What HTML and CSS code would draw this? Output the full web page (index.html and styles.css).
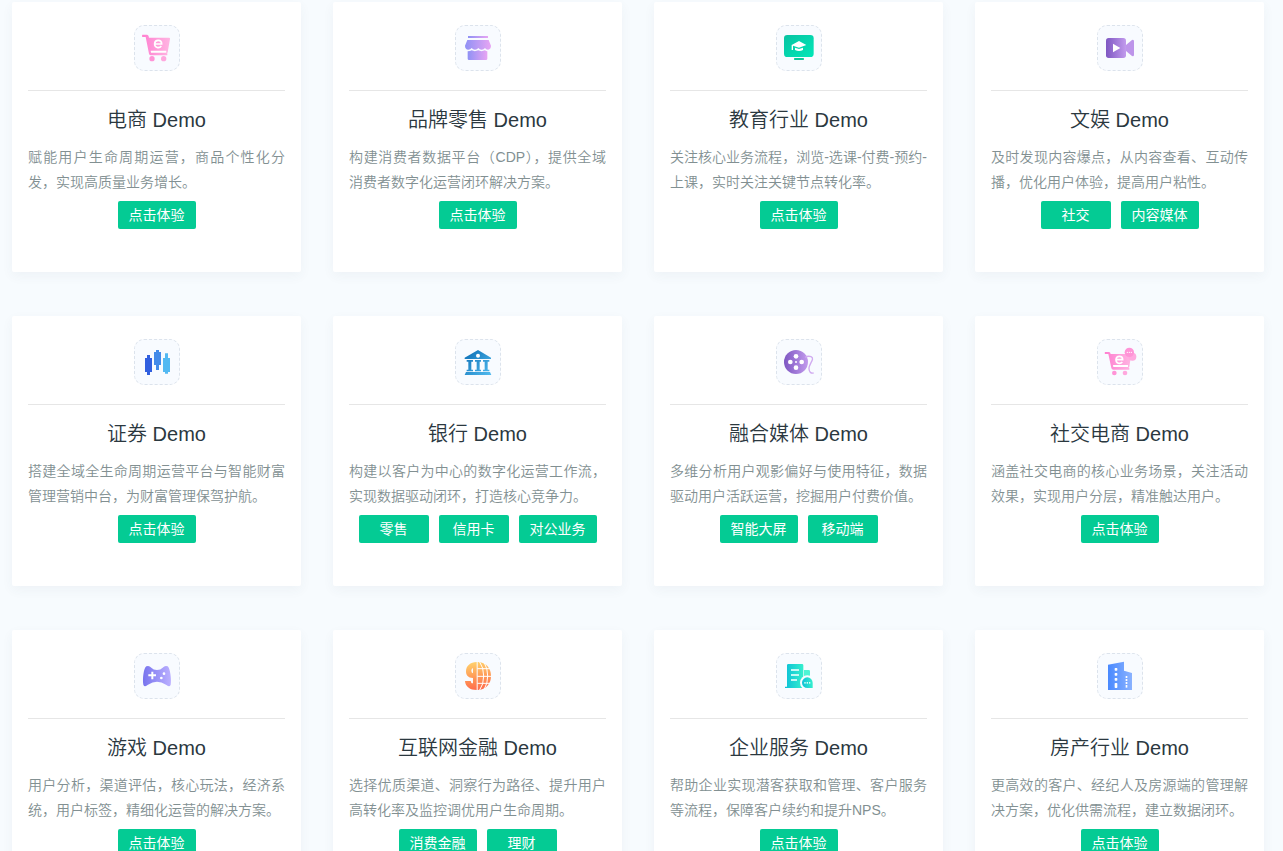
FILE: index.html
```html
<!DOCTYPE html>
<html lang="zh-CN">
<head>
<meta charset="utf-8">
<meta name="viewport" content="width=device-width, initial-scale=1">
<title>行业 Demo</title>
<link rel="stylesheet" href="styles.css">
</head>
<body>
<main class="page">
<div class="grid">

<article class="card">
  <div class="icon"><svg viewBox="24 24 132 132" aria-hidden="true">
    <defs><linearGradient id="pink"><stop offset="0" stop-color="#ff7fd0"/><stop offset="1" stop-color="#ffb5e2"/></linearGradient></defs>
    <path fill="url(#pink)" d="M46 50h14q4 0 5 5l1 4h60q4 0 3 4l-7 40q-1 3-4 3h3v6H72q-5 0-6-5L56 57H46q-2-3 0-7z"/>
    <path fill="#fff" d="M71 98h47v6H72z"/>
    <circle cx="75" cy="122" r="8" fill="#ff94d7"/><circle cx="110" cy="122" r="8" fill="#ffa8de"/>
    <path fill="none" stroke="#fff" stroke-width="5" d="M85 78h19c0-14-20-15-21-1-1 13 14 15 20 7"/>
  </svg></div>
  <h2 class="title">电商 Demo</h2>
  <p class="desc">赋能用户生命周期运营，商品个性化分发，实现高质量业务增长。</p>
  <div class="actions"><a class="btn" href="#">点击体验</a></div>
</article>

<article class="card">
  <div class="icon"><svg viewBox="24 24 132 132" aria-hidden="true">
    <defs><linearGradient id="shop"><stop offset="0" stop-color="#8f91f5"/><stop offset="1" stop-color="#e8a5f3"/></linearGradient></defs>
    <g fill="url(#shop)"><rect x="60" y="54" width="60" height="6"/>
    <path d="M58 66h64l7 17q0 10-9 12-6 0-9-5-4 5-10 5t-10-5q-4 5-10 5t-10-5q-4 5-10 5-10-1-10-12z"/>
    <path d="M59 100q8 0 12-3 9 5 20 0 9 5 20 0 3 3 7 3v22q0 4-4 4H63q-4 0-4-4z"/></g>
  </svg></div>
  <h2 class="title">品牌零售 Demo</h2>
  <p class="desc">构建消费者数据平台（CDP），提供全域消费者数字化运营闭环解决方案。</p>
  <div class="actions"><a class="btn" href="#">点击体验</a></div>
</article>

<article class="card">
  <div class="icon"><svg viewBox="24 24 132 132" aria-hidden="true">
    <defs><linearGradient id="edu" x2="1" y2="1"><stop offset="0" stop-color="#08c3a2"/><stop offset="1" stop-color="#00e7b8"/></linearGradient></defs>
    <rect x="45" y="51" width="89" height="66" rx="10" fill="url(#edu)"/>
    <rect x="75" y="120" width="30" height="6" rx="2" fill="#09c99b"/>
    <path fill="#fff" d="M68 81l22-12 22 12-22 8-18-6v13h-4z"/>
    <path fill="#fff" d="M78 89l12 4 12-4v7q-12 6-24 0z"/>
  </svg></div>
  <h2 class="title">教育行业 Demo</h2>
  <p class="desc">关注核心业务流程，浏览-选课-付费-预约-上课，实时关注关键节点转化率。</p>
  <div class="actions"><a class="btn" href="#">点击体验</a></div>
</article>

<article class="card">
  <div class="icon"><svg viewBox="24 24 132 132" aria-hidden="true">
    <defs><linearGradient id="violet"><stop offset="0" stop-color="#7e57c2"/><stop offset="1" stop-color="#c29bed"/></linearGradient></defs>
    <rect x="48" y="60" width="60" height="60" rx="8" fill="url(#violet)"/>
    <path fill="#bd95ea" d="M108 81l18-15q6-2 6 4v40q0 6-6 4l-18-15z"/>
    <path fill="#fff" d="M69 77l22 13-22 13z"/>
  </svg></div>
  <h2 class="title">文娱 Demo</h2>
  <p class="desc">及时发现内容爆点，从内容查看、互动传播，优化用户体验，提高用户粘性。</p>
  <div class="actions"><a class="btn" href="#">社交</a><a class="btn" href="#">内容媒体</a></div>
</article>

<article class="card">
  <div class="icon"><svg viewBox="24 24 132 132" aria-hidden="true">
    <path fill="#315fdf" d="M60 69h9v9h6v42h-6v9h-9v-9h-6V78h6z"/>
    <path fill="#438be9" d="M87 54h9v6h6v39h-6v15h-9V99h-6V60h6z"/>
    <path fill="#53b9f2" d="M114 64h9v14h6v42h-6v5h-9v-5h-6V78h6z"/>
  </svg></div>
  <h2 class="title">证券 Demo</h2>
  <p class="desc">搭建全域全生命周期运营平台与智能财富管理营销中台，为财富管理保驾护航。</p>
  <div class="actions"><a class="btn" href="#">点击体验</a></div>
</article>

<article class="card">
  <div class="icon"><svg viewBox="24 24 132 132" aria-hidden="true">
    <defs><linearGradient id="bank" gradientUnits="userSpaceOnUse" x1="50" y1="54" x2="130" y2="130"><stop offset="0" stop-color="#086bb3"/><stop offset="1" stop-color="#54bdf0"/></linearGradient></defs>
    <path fill="url(#bank)" d="M50 77l40-23 39 23v4H50zM56 84h19v5h-5v24h5v5H56v-5h5V89h-5zM81 84h18v5h-4v24h4v5H81v-5h5V89h-5zM105 84h19v5h-5v24h5v5h-19v-5h5V89h-5zM54 120h72l4 9H50z"/>
    <circle cx="90" cy="71" r="6" fill="#fff"/>
  </svg></div>
  <h2 class="title">银行 Demo</h2>
  <p class="desc">构建以客户为中心的数字化运营工作流，实现数据驱动闭环，打造核心竞争力。</p>
  <div class="actions"><a class="btn" href="#">零售</a><a class="btn" href="#">信用卡</a><a class="btn" href="#">对公业务</a></div>
</article>

<article class="card">
  <div class="icon"><svg viewBox="24 24 132 132" aria-hidden="true">
    <circle cx="81" cy="90" r="36" fill="url(#violet)"/>
    <g fill="#fff"><circle cx="81" cy="73" r="7"/><circle cx="64" cy="90" r="7"/><circle cx="98" cy="90" r="7"/><circle cx="81" cy="107" r="7"/><circle cx="81" cy="90" r="3"/></g>
    <path fill="none" stroke="#d0aaf0" stroke-width="4" d="M109 76q8-5 17-2c14 6-8 22-6 37 1 10 5 13 14 12"/>
  </svg></div>
  <h2 class="title">融合媒体 Demo</h2>
  <p class="desc">多维分析用户观影偏好与使用特征，数据驱动用户活跃运营，挖掘用户付费价值。</p>
  <div class="actions"><a class="btn" href="#">智能大屏</a><a class="btn" href="#">移动端</a></div>
</article>

<article class="card">
  <div class="icon"><svg viewBox="24 24 132 132" aria-hidden="true">
    <path fill="url(#pink)" d="M45 60h12q4 0 5 6h56q6 0 5 5l-5 33q-1 3-4 3h4v6H70q-5 0-6-5l-9-42H45q-2-3 0-6z"/>
    <path fill="#fff" d="M69 99h45v6H70z"/>
    <circle cx="73" cy="123" r="7" fill="#ff94d7"/><circle cx="105" cy="123" r="7" fill="#ffa8de"/>
    <path fill="none" stroke="#fff" stroke-width="5" d="M80 83h18c0-13-19-13-20 0 0 12 13 14 19 7"/>
    <circle cx="127" cy="74" r="12" fill="#ffa9df"/>
    <circle cx="118" cy="61" r="14" fill="#ff94d7"/>
    <g fill="#fff"><circle cx="112" cy="61" r="2"/><circle cx="118" cy="61" r="2"/><circle cx="124" cy="61" r="2"/></g>
  </svg></div>
  <h2 class="title">社交电商 Demo</h2>
  <p class="desc">涵盖社交电商的核心业务场景，关注活动效果，实现用户分层，精准触达用户。</p>
  <div class="actions"><a class="btn" href="#">点击体验</a></div>
</article>

<article class="card">
  <div class="icon"><svg viewBox="24 24 132 132" aria-hidden="true">
    <defs><linearGradient id="game"><stop offset="0" stop-color="#7874ee"/><stop offset="1" stop-color="#bbb0ff"/></linearGradient></defs>
    <path fill="url(#game)" d="M58 61q8-4 15 4 6 7 17 7t17-7q7-8 15-4c7 5 12 38 9 55q-2 6-8 4l-6-4q-27-17-54 0l-6 4q-6 2-8-4c-3-17 1-50 9-55z"/>
    <path fill="none" stroke="#fff" stroke-width="6" d="M64 88h23M76 77v23"/>
    <circle cx="111" cy="83" r="4" fill="#fff"/><circle cx="103" cy="96" r="4" fill="#fff"/>
  </svg></div>
  <h2 class="title">游戏 Demo</h2>
  <p class="desc">用户分析，渠道评估，核心玩法，经济系统，用户标签，精细化运营的解决方案。</p>
  <div class="actions"><a class="btn" href="#">点击体验</a></div>
</article>

<article class="card">
  <div class="icon"><svg viewBox="24 24 132 132" aria-hidden="true">
    <defs><linearGradient id="coin" gradientUnits="userSpaceOnUse" x1="80" y1="48" x2="90" y2="132"><stop offset="0" stop-color="#ffd16c"/><stop offset="0.45" stop-color="#ffa25a"/><stop offset="1" stop-color="#ff6b4b"/></linearGradient></defs>
    <path fill="url(#coin)" d="M86 48v84c-20 0-34-10-35-27h17q2 10 7 6V96C60 96 54 88 54 76c0-16 13-28 32-28z"/>
    <path fill="#f8fbff" d="M75 66q-5 2-5 8t5 8z"/>
    <path fill="url(#coin)" d="M89 48c25 1 40 18 40 42s-15 41-40 42z"/>
    <path fill="none" stroke="#fff" stroke-width="3" d="M95 48q12 16 12 42t-12 42M109 51q10 16 10 39t-10 39M88 68h38M88 91h42M88 112h38"/>
  </svg></div>
  <h2 class="title">互联网金融 Demo</h2>
  <p class="desc">选择优质渠道、洞察行为路径、提升用户高转化率及监控调优用户生命周期。</p>
  <div class="actions"><a class="btn" href="#">消费金融</a><a class="btn" href="#">理财</a></div>
</article>

<article class="card">
  <div class="icon"><svg viewBox="24 24 132 132" aria-hidden="true">
    <defs><linearGradient id="corp"><stop offset="0" stop-color="#0cc0d7"/><stop offset="1" stop-color="#35efcd"/></linearGradient></defs>
    <path fill="#4df5d4" d="M105 72h14q4 0 4 4v20h-18z"/>
    <path fill="url(#corp)" d="M54 58q0-4 4-4h41q4 0 4 4v68H48v-4h6z"/>
    <path stroke="#c5f8f4" stroke-width="6" d="M66 72h24M66 87h24M66 102h18"/>
    <circle cx="115" cy="110" r="22" fill="#f8fbff"/>
    <path fill="url(#corp)" d="M115 94a16 16 0 0 1 16 16v16h-16a16 16 0 0 1 0-32z"/>
    <g fill="#d8fff7"><rect x="106" y="108" width="4" height="5"/><rect x="113" y="108" width="4" height="5"/><rect x="120" y="108" width="4" height="5"/></g>
  </svg></div>
  <h2 class="title">企业服务 Demo</h2>
  <p class="desc">帮助企业实现潜客获取和管理、客户服务等流程，保障客户续约和提升NPS。</p>
  <div class="actions"><a class="btn" href="#">点击体验</a></div>
</article>

<article class="card">
  <div class="icon"><svg viewBox="24 24 132 132" aria-hidden="true">
    <defs><linearGradient id="estate"><stop offset="0" stop-color="#4989ff"/><stop offset="1" stop-color="#8ab2ff"/></linearGradient></defs>
    <path fill="url(#estate)" d="M54 56l48-9v27l24 7v51H54z"/>
    <g fill="#fff"><rect x="74" y="66" width="8" height="8" rx="2"/><rect x="74" y="81" width="8" height="8" rx="2"/><rect x="74" y="96" width="8" height="8" rx="2"/><rect x="74" y="111" width="8" height="15" rx="2"/><rect x="107" y="90" width="5" height="6"/><rect x="107" y="99" width="5" height="6"/><rect x="107" y="108" width="5" height="6"/><rect x="107" y="117" width="5" height="8"/></g>
  </svg></div>
  <h2 class="title">房产行业 Demo</h2>
  <p class="desc">更高效的客户、经纪人及房源端的管理解决方案，优化供需流程，建立数据闭环。</p>
  <div class="actions"><a class="btn" href="#">点击体验</a></div>
</article>

</div>
</main>
</body>
</html>
```

FILE: styles.css
```css
* {
  box-sizing: border-box;
}

body {
  margin: 0;
  background: #f7fbfe;
  color: #2f3d45;
  font-family: "Liberation Sans", "Noto Sans CJK SC", sans-serif;
  font-weight: 350;
}

.page {
  height: 100vh;
  overflow-y: auto;
  scrollbar-width: none;
  padding: 2px 19px 44px 12px;
}

.grid {
  display: grid;
  grid-template-columns: repeat(4, minmax(0, 1fr));
  gap: 44px 32px;
}

.card {
  min-height: 270px;
  padding: 23px 16px 40px;
  display: flex;
  flex-direction: column;
  align-items: center;
  background: #fff;
  border-radius: 2px;
  box-shadow: 0 4px 12px rgba(50, 80, 100, 0.05);
}

.icon {
  width: 46px;
  height: 46px;
  border: 1px dashed #dce3ec;
  border-radius: 10px;
  background: #f8fbff;
}

.icon svg {
  display: block;
  width: 100%;
  height: 100%;
}

.title {
  width: 100%;
  margin: 19px 0 11px;
  padding-top: 15px;
  border-top: 1px solid #e6e6e6;
  color: #2b383f;
  font-size: 20px;
  line-height: 28px;
  font-weight: 350;
  text-align: center;
}

.desc {
  width: 100%;
  margin: 0 0 6px;
  color: #829092;
  font-size: 14px;
  line-height: 25px;
  text-align: justify;
}

.actions {
  display: flex;
  justify-content: center;
  gap: 10px;
}

.btn {
  min-width: 70px;
  padding: 0 11px;
  border-radius: 2px;
  background: #04cb94;
  color: #fff;
  font-size: 14px;
  line-height: 28px;
  font-weight: 400;
  text-align: center;
  text-decoration: none;
  white-space: nowrap;
}
```
